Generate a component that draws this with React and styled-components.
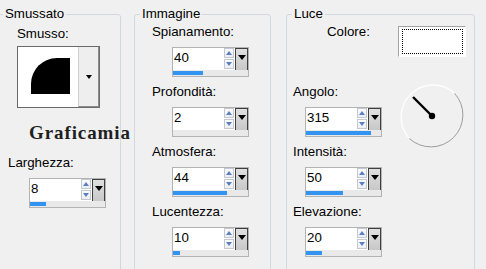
import React from "react";
import styled, { createGlobalStyle } from "styled-components";

const GlobalStyle = createGlobalStyle`
  html, body {
    margin: 0;
    padding: 0;
    background: #f0f0f0;
  }
  body {
    font-family: "Liberation Sans", Arial, sans-serif;
    font-size: 13.3px;
    color: #000;
    overflow: hidden;
  }
`;

const Page = styled.div`
  display: flex;
  align-items: flex-start;
  height: 269px;
  padding-top: 6px;
  box-sizing: border-box;
  overflow: hidden;
`;

const Group = styled.fieldset`
  box-sizing: border-box;
  width: ${(p) => p.$width}px;
  height: 300px;
  margin: 0 0 0 ${(p) => p.$offset}px;
  padding: 0;
  min-width: 0;
  border: 1px solid #d3d8dc;
  border-radius: 3px;
  display: flex;
  flex-direction: column;
`;

const Title = styled.legend`
  margin-left: 5px;
  padding: 0 2px;
  line-height: 16px;
`;

const Label = styled.div`
  line-height: 16px;
  white-space: nowrap;
  margin-left: ${(p) => p.$indent}px;
  margin-top: ${(p) => p.$top || 0}px;
`;

const Fields = styled.div`
  display: flex;
  flex-direction: column;
  gap: 7px;
  padding-top: 2px;
`;

const Field = styled.div`
  display: flex;
  flex-direction: column;
  gap: 7px;
  margin-top: ${(p) => p.$top || 0}px;
`;

/* spin control with slider bar */
const SpinBox = styled.div`
  box-sizing: border-box;
  width: 77px;
  margin-left: ${(p) => p.$indent}px;
  border: 1px solid #b3b3b3;
  background: #fff;
  display: flex;
  flex-direction: column;
`;

const SpinTop = styled.div`
  display: flex;
  height: 22px;
`;

const SpinValue = styled.div`
  flex: 1;
  padding: 2px 0 0 1px;
  line-height: 16px;
`;

const Steppers = styled.div`
  width: 11px;
  display: flex;
  flex-direction: column;
  gap: 1px;
`;

const Step = styled.div`
  box-sizing: border-box;
  width: 10px;
  height: 10px;
  border: 1px solid #c3c8cf;
  background: linear-gradient(#fbfbfb, #eceef2);
  display: flex;
  align-items: center;
  justify-content: center;
`;

const StepArrow = styled.span`
  width: 0;
  height: 0;
  border-left: 3.5px solid transparent;
  border-right: 3.5px solid transparent;
  ${(p) =>
    p.$up
      ? "border-bottom: 4px solid #5a7ec6;"
      : "border-top: 4px solid #5a7ec6;"}
`;

const DropBtn = styled.div`
  box-sizing: border-box;
  width: 13px;
  height: 23px;
  border: 1px solid #3f3f3f;
  border-bottom-color: #8a8a8a;
  background: linear-gradient(#e0e0e0, #c8c8c8);
  display: flex;
  justify-content: center;
  padding-top: 6px;
`;

const DropArrow = styled.span`
  width: 0;
  height: 0;
  border-left: 4.5px solid transparent;
  border-right: 4.5px solid transparent;
  border-top: 5px solid #000;
`;

const Track = styled.div`
  height: 6px;
  background: #e9e9e9;
  padding-top: 1px;
  box-sizing: border-box;
`;

const Bar = styled.div`
  height: 4px;
  background: #3393f0;
`;

const Spin = ({ value, min = 0, max, indent }) => (
  <SpinBox $indent={indent}>
    <SpinTop>
      <SpinValue>{value}</SpinValue>
      <Steppers>
        <Step>
          <StepArrow $up />
        </Step>
        <Step>
          <StepArrow />
        </Step>
      </Steppers>
      <DropBtn>
        <DropArrow />
      </DropBtn>
    </SpinTop>
    <Track>
      <Bar style={{ width: `${Math.floor(((value - min) / (max - min)) * 75)}px` }} />
    </Track>
  </SpinBox>
);

/* bevel shape picker */
const BevelPicker = styled.div`
  box-sizing: border-box;
  display: flex;
  width: 83px;
  height: 62px;
  margin: 4px 0 0 19px;
  border: 1px solid #6a6a6a;
  background: #fff;
`;

const BevelPreview = styled.div`
  flex: 1;
  display: flex;
`;

const BevelDrop = styled.div`
  box-sizing: border-box;
  width: 21px;
  border-left: 1px solid #cfcfcf;
  border-right: 1px solid #8c8c8c;
  border-bottom: 1px solid #8c8c8c;
  background: #eeeeee;
  display: flex;
  align-items: center;
  justify-content: center;
`;

const SmallArrow = styled.span`
  width: 0;
  height: 0;
  border-left: 3.5px solid transparent;
  border-right: 3.5px solid transparent;
  border-top: 4px solid #000;
`;

const Watermark = styled.div`
  margin: 15px 0 0 31px;
  font-family: "Liberation Serif", "Times New Roman", serif;
  font-weight: bold;
  font-size: 19px;
  line-height: 19px;
  letter-spacing: 0.9px;
  color: #1f1f1f;
  white-space: nowrap;
`;

/* light panel */
const ColorRow = styled.div`
  display: flex;
  align-items: flex-start;
  margin-top: 2px;
`;

const Swatch = styled.div`
  box-sizing: border-box;
  width: 68px;
  height: 31px;
  margin: 2px 8px 0 auto;
  padding: 2px 2px 2px 3px;
  border: 1px solid;
  border-color: #a3a3a3 #ffffff #ffffff #a3a3a3;
  background: #fff;
`;

const SwatchFocus = styled.div`
  box-sizing: border-box;
  height: 100%;
  border: 1px dotted #000;
`;

const AngleRow = styled.div`
  display: flex;
  align-items: flex-start;
  margin-top: 27px;
`;

const Dial = styled.svg`
  margin: -1px 9px -12px auto;
`;

export default function App() {
  return (
    <>
      <GlobalStyle />
      <Page>
        <Group $width={124} $offset={-3}>
          <Title>Smussato</Title>
          <Label $indent={19} $top={4}>
            Smusso:
          </Label>
          <BevelPicker>
            <BevelPreview>
              <svg width="60" height="60" viewBox="0 0 60 60">
                <path d="M13 47 L13 37 A26 26 0 0 1 39 11 L52 11 L52 47 Z" fill="#000" />
              </svg>
            </BevelPreview>
            <BevelDrop>
              <SmallArrow />
            </BevelDrop>
          </BevelPicker>
          <Watermark>Graficamia</Watermark>
          <Field $top={13}>
            <Label $indent={10}>Larghezza:</Label>
            <Spin value={8} max={36} indent={31} />
          </Field>
        </Group>

        <Group $width={137} $offset={13}>
          <Title>Immagine</Title>
          <Fields>
            <Field>
              <Label $indent={17}>Spianamento:</Label>
              <Spin value={40} max={100} indent={37} />
            </Field>
            <Field>
              <Label $indent={17}>Profondità:</Label>
              <Spin value={2} min={1} max={100} indent={37} />
            </Field>
            <Field>
              <Label $indent={17}>Atmosfera:</Label>
              <Spin value={44} max={60} indent={37} />
            </Field>
            <Field>
              <Label $indent={17}>Lucentezza:</Label>
              <Spin value={10} max={100} indent={37} />
            </Field>
          </Fields>
        </Group>

        <Group $width={189} $offset={15}>
          <Title>Luce</Title>
          <ColorRow>
            <Label $indent={40}>Colore:</Label>
            <Swatch>
              <SwatchFocus />
            </Swatch>
          </ColorRow>
          <AngleRow>
            <Field>
              <Label $indent={6}>Angolo:</Label>
              <Spin value={315} max={360} indent={18} />
            </Field>
            <Dial width="66" height="66" viewBox="0 0 66 66">
              <path d="M10.4 55.6 A32 32 0 0 1 55.6 10.4" fill="none" stroke="#fdfdfd" strokeWidth="1.5" />
              <path d="M55.6 10.4 A32 32 0 0 1 10.4 55.6" fill="none" stroke="#9c9c9c" strokeWidth="1" />
              <line x1="14" y1="14" x2="33" y2="33" stroke="#000" strokeWidth="2.4" />
              <circle cx="33" cy="33" r="3.2" fill="#000" />
            </Dial>
          </AngleRow>
          <Field $top={7}>
            <Label $indent={6}>Intensità:</Label>
            <Spin value={50} max={100} indent={18} />
          </Field>
          <Field $top={7}>
            <Label $indent={6}>Elevazione:</Label>
            <Spin value={20} max={90} indent={18} />
          </Field>
        </Group>
      </Page>
    </>
  );
}
